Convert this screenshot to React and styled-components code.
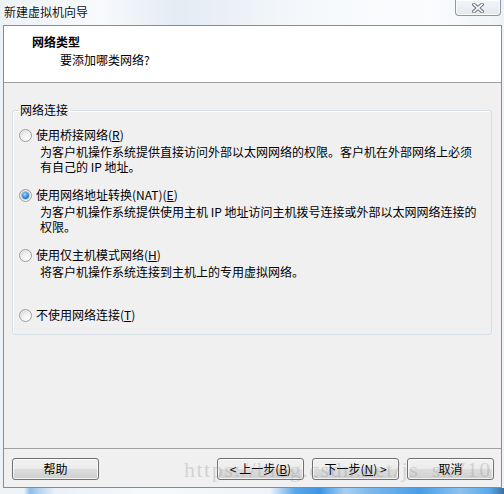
import React from "react";
import styled, { createGlobalStyle } from "styled-components";

const Global = createGlobalStyle`
  html, body { margin: 0; padding: 0; }
  body {
    width: 504px; height: 494px; overflow: hidden;
    font-family: "Noto Sans CJK SC", "Liberation Sans", sans-serif;
    font-size: 12px; color: #000;
  }
  * { box-sizing: border-box; }
`;

const Window = styled.div`
  position: relative;
  width: 504px;
  height: 494px;
  display: flex;
  flex-direction: column;
  background: linear-gradient(to right, #edf2f7 0%, #f8fafc 20%, #e4ebf3 35%, #f5f8fb 60%, #fbfcfe 85%, #eef2f6 100%);
  overflow: hidden;
`;

const TitleBar = styled.div`
  height: 25px;
  display: flex;
  align-items: flex-start;
  padding-left: 4px;
  flex-shrink: 0;
`;

const Title = styled.div`
  line-height: 24px;
  font-size: 12px;
  color: #111;
  text-shadow: 0 0 6px #fff, 0 0 3px #fff;
`;

const CloseButton = styled.div`
  margin-left: auto;
  margin-right: 3px;
  width: 46px;
  height: 16px;
  border: 1px solid #8d98a5;
  border-top: none;
  border-radius: 0 0 4px 4px;
  background: linear-gradient(#f3f5f8, #e3e8ee);
  display: flex;
  align-items: center;
  justify-content: center;
  box-shadow: inset 0 0 0 1px rgba(255, 255, 255, 0.7);
`;

const Frame = styled.div`
  margin: 0 2px 0 3px;
  height: 463px;
  border: 1px solid #8c8c8c;
  display: flex;
  flex-direction: column;
  flex-shrink: 0;
`;

const Header = styled.div`
  height: 57px;
  background: #fff;
  border-bottom: 1px solid #a0a0a0;
  padding: 8px 0 0 28px;
`;

const HeaderTitle = styled.div`
  font-weight: 700;
  line-height: 16px;
`;

const HeaderSub = styled.div`
  line-height: 16px;
  margin-top: 2px;
  padding-left: 28px;
`;

const Body = styled.div`
  flex: 1;
  background: #f0f0f0;
  padding: 19px 9px 0 8px;
`;

const Group = styled.fieldset`
  margin: 0;
  min-width: 0;
  padding: 9px 10px 11px 6px;
  border: 1px solid #d5dfe5;
  border-radius: 3px;
  box-shadow: inset 1px 1px 0 #fff;
`;

const Legend = styled.legend`
  padding: 0 2px;
  margin-left: -1px;
  line-height: 16px;
`;

const Option = styled.div`
  margin-bottom: ${(p) => (p.$last ? "0" : "13px")};
`;

const OptionLabel = styled.div`
  display: flex;
  align-items: center;
  height: 16px;
  gap: 4px;
  line-height: 16px;
  white-space: nowrap;
`;

const Radio = styled.span`
  position: relative;
  width: 13px;
  height: 13px;
  border-radius: 50%;
  border: 1px solid #9c9c9c;
  background: radial-gradient(circle at 68% 72%, #ffffff 0%, #f0f0f0 40%, #cdcdcd 100%);
  box-shadow: inset 0 0 0 1px rgba(255, 255, 255, 0.5);
  flex-shrink: 0;
  &::after {
    content: "";
    display: ${(p) => (p.$checked ? "block" : "none")};
    position: absolute;
    left: 2px;
    top: 2px;
    width: 7px;
    height: 7px;
    border-radius: 50%;
    background: radial-gradient(circle at 40% 35%, #a6d8ff 0%, #3b92e3 45%, #0d4f9c 100%);
    box-shadow: 0 0 0 1px rgba(60, 110, 170, 0.3);
  }
`;

const Desc = styled.div`
  margin: 1px 0 0 21px;
  line-height: 15px;
  min-height: ${(p) => (p.$lines === 0 ? "0" : "30px")};
  white-space: nowrap;
`;

const Key = styled.span`
  text-decoration: underline;
  text-underline-offset: 1px;
`;

const Footer = styled.div`
  height: 39px;
  background: #f0f0f0;
  border-top: 1px solid #a0a0a0;
  padding: 9px 7px 0 8px;
  display: flex;
  align-items: flex-start;
  gap: 8px;
  position: relative;
`;

const Button = styled.button`
  width: 87px;
  height: 22px;
  margin: 0;
  margin-right: ${(p) => (p.$spaced ? "auto" : "0")};
  padding: 0;
  border: 1px solid #707070;
  border-radius: 3px;
  font-family: "Noto Sans CJK SC", "Liberation Sans", sans-serif;
  font-size: 12px;
  line-height: 18px;
  color: #000;
  background: linear-gradient(#f2f2f2 0%, #ebebeb 50%, #dddddd 50%, #cfcfcf 100%);
  box-shadow: inset 0 0 0 1px rgba(255, 255, 255, 0.75);
`;

const Watermark = styled.div`
  position: absolute;
  left: 180px;
  top: 8px;
  font-family: "Liberation Serif", serif;
  font-size: 22px;
  letter-spacing: 1.5px;
  line-height: 26px;
  color: rgba(140, 140, 140, 0.3);
  pointer-events: none;
  white-space: nowrap;
`;

const BottomGlow = styled.div`
  flex: 1;
  background: linear-gradient(
    to right,
    #eef3f8 0px,
    #eef3f8 24px,
    #8fbdea 30px,
    #b9d6f2 40px,
    #e9f1f9 55px,
    #f6f9fc 150px,
    #eef4fa 270px,
    #5aa6ea 295px,
    #3d95e4 320px,
    #a9cff2 345px,
    #7ab9ee 370px,
    #4a9de6 420px,
    #8cc3f0 460px,
    #5aa6ea 490px,
    #3c6f9e 504px
  );
`;

function CloseGlyph() {
  return (
    <svg width="12" height="10" viewBox="0 0 12 10">
      <g strokeLinecap="square">
        <line x1="2" y1="1.5" x2="10" y2="8.5" stroke="#6f7780" strokeWidth="3.6" />
        <line x1="10" y1="1.5" x2="2" y2="8.5" stroke="#6f7780" strokeWidth="3.6" />
        <line x1="2" y1="1.5" x2="10" y2="8.5" stroke="#ffffff" strokeWidth="1.6" />
        <line x1="10" y1="1.5" x2="2" y2="8.5" stroke="#ffffff" strokeWidth="1.6" />
      </g>
    </svg>
  );
}

const options = [
  {
    label: (
      <>
        使用桥接网络(<Key>R</Key>)
      </>
    ),
    lines: ["为客户机操作系统提供直接访问外部以太网网络的权限。客户机在外部网络上必须", "有自己的 IP 地址。"],
  },
  {
    label: (
      <>
        使用网络地址转换(NAT)(<Key>E</Key>)
      </>
    ),
    checked: true,
    lines: ["为客户机操作系统提供使用主机 IP 地址访问主机拨号连接或外部以太网网络连接的", "权限。"],
  },
  {
    label: (
      <>
        使用仅主机模式网络(<Key>H</Key>)
      </>
    ),
    lines: ["将客户机操作系统连接到主机上的专用虚拟网络。"],
  },
  {
    label: (
      <>
        不使用网络连接(<Key>T</Key>)
      </>
    ),
    lines: [],
  },
];

export default function App() {
  return (
    <>
      <Global />
      <Window>
        <TitleBar>
          <Title>新建虚拟机向导</Title>
          <CloseButton>
            <CloseGlyph />
          </CloseButton>
        </TitleBar>
        <Frame>
          <Header>
            <HeaderTitle>网络类型</HeaderTitle>
            <HeaderSub>要添加哪类网络?</HeaderSub>
          </Header>
          <Body>
            <Group>
              <Legend>网络连接</Legend>
              {options.map((o, i) => (
                <Option key={i} $last={i === options.length - 1}>
                  <OptionLabel>
                    <Radio $checked={!!o.checked} />
                    <span>{o.label}</span>
                  </OptionLabel>
                  {o.lines.length > 0 && (
                    <Desc $lines={o.lines.length}>
                      {o.lines.map((l, j) => (
                        <div key={j}>{l}</div>
                      ))}
                    </Desc>
                  )}
                </Option>
              ))}
            </Group>
          </Body>
          <Footer>
            <Button $spaced>帮助</Button>
            <Button>&lt; 上一步(<Key>B</Key>)</Button>
            <Button>下一步(<Key>N</Key>) &gt;</Button>
            <Button>取消</Button>
            <Watermark>https://blog.csdn.net/js_sx710</Watermark>
          </Footer>
        </Frame>
        <BottomGlow />
      </Window>
    </>
  );
}
